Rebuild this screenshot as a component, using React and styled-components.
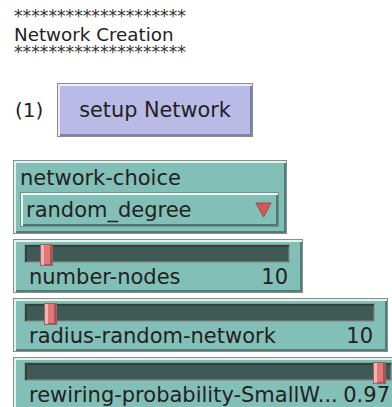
import styled, { createGlobalStyle } from 'styled-components'

const GlobalStyle = createGlobalStyle`
  body {
    margin: 0;
    background: #fff;
    font-family: "DejaVu Sans", "Liberation Sans", sans-serif;
    overflow: hidden;
  }
`

const Page = styled.div`
  width: 392px;
  height: 407px;
  overflow: hidden;
  box-sizing: border-box;
  padding: 8px 0 0 13px;
  display: flex;
  flex-direction: column;
  color: #222;
`

const Note = styled.div`
  font-size: 18.3px;
  line-height: 19px;
  padding-left: 1px;
`

const Stars = styled.div`
  font-size: 17.2px;
  line-height: 17px;
  color: #333;
`

const ButtonRow = styled.div`
  display: flex;
  align-items: center;
  margin-top: 22px;
`

const Order = styled.span`
  font-size: 20px;
  width: 42px;
  padding-left: 2px;
`

const Button = styled.div`
  width: 196px;
  height: 54px;
  box-sizing: border-box;
  display: flex;
  align-items: center;
  justify-content: center;
  font-size: 20.8px;
  background: #babae6;
  border: 1px solid #8c8c8c;
  box-shadow: inset 2px 2px 0 #ececff, inset -2px -2px 0 #7f7fa8;
`

const Widget = styled.div`
  width: ${p => p.$w}px;
  box-sizing: border-box;
  background: #82bfb6;
  border: 1px solid #8c8c8c;
  box-shadow: inset 2px 2px 0 #dff3ef, inset -2px -2px 0 #4f7f78;
  flex-shrink: 0;
`

const Chooser = styled(Widget)`
  height: 74px;
  margin-top: 23px;
  padding: 5px 7px 0 6px;
  font-size: 21px;
`

const ChooserLabel = styled.div`
  line-height: 24px;
  margin-bottom: 2px;
`

const Dropdown = styled.div`
  height: 35px;
  box-sizing: border-box;
  display: flex;
  align-items: center;
  justify-content: space-between;
  padding: 0 6px 0 5px;
  border: 1px solid #6f8f8a;
  box-shadow: inset 2px 2px 0 #e8f7f4, inset -2px -2px 0 #4d7a73;
`

const Slider = styled(Widget)`
  height: 54px;
  margin-top: 5px;
  padding: 4px 12px 0 10px;
`

const Track = styled.div`
  position: relative;
  height: 19px;
  box-sizing: border-box;
  background: #3f5955;
  border: 1px solid #8c9c99;
  box-shadow: inset 2px 2px 0 #2e423f, inset -1px -1px 0 #5c7a75;
`

const Knob = styled.div`
  position: absolute;
  top: -1px;
  width: 13px;
  height: 22px;
  box-sizing: border-box;
  background: #e07878;
  border: 1px solid #8a6a6a;
  box-shadow: inset 3px 0 0 #f3b3b3, inset -2px -1px 0 #b44e4e;
`

const SliderText = styled.div`
  display: flex;
  justify-content: space-between;
  font-size: 21px;
  line-height: 28px;
  padding: 0 2px 0 5px;
  white-space: nowrap;
`

const sliders = [
  { name: 'number-nodes', value: '10', w: 290, pos: 0.06 },
  { name: 'radius-random-network', value: '10', w: 375, pos: 0.058 },
  { name: 'rewiring-probability-SmallW...', value: '0.97', w: 392, pos: 0.985 },
]

export default function App() {
  return (
    <Page>
      <GlobalStyle />
      <Note>
        <Stars>********************</Stars>
        <div>Network Creation</div>
        <Stars>********************</Stars>
      </Note>
      <ButtonRow>
        <Order>(1)</Order>
        <Button>setup Network</Button>
      </ButtonRow>
      <Chooser $w={274}>
        <ChooserLabel>network-choice</ChooserLabel>
        <Dropdown>
          <span>random_degree</span>
          <svg width="17" height="16" viewBox="0 0 17 16">
            <polygon points="1,1 16,1 8.5,15" fill="#d05a5a" stroke="#9c4a4a" strokeWidth="1" />
          </svg>
        </Dropdown>
      </Chooser>
      {sliders.map(s => (
        <Slider key={s.name} $w={s.w}>
          <Track>
            <Knob style={{ left: `calc(${s.pos} * (100% - 13px))` }} />
          </Track>
          <SliderText>
            <span>{s.name}</span>
            <span>{s.value}</span>
          </SliderText>
        </Slider>
      ))}
    </Page>
  )
}
